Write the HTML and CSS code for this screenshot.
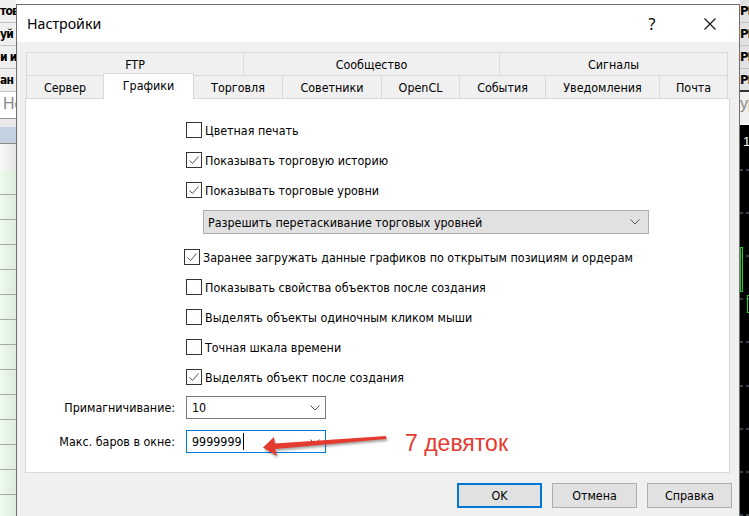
FILE: index.html
```html
<!DOCTYPE html>
<html lang="ru">
<head>
  <meta charset="UTF-8">
  <meta name="viewport" content="width=device-width, initial-scale=1.0">
  <title>Настройки</title>
  <link rel="stylesheet" href="styles.css">
</head>
<body>
<div class="desk">

  <!-- окно терминала слева (видна только узкая полоска) -->
  <div class="side side-left">
    <div class="side-row">тов</div>
    <div class="side-row">уй</div>
    <div class="side-row">и и</div>
    <div class="side-row">ан</div>
    <div class="side-note">Не</div>
    <div class="grid-band"></div>
    <div class="grid-head"></div>
    <div class="grid-top"></div>
    <div class="grid-rows">
      <div class="grid-row"></div><div class="grid-row"></div><div class="grid-row"></div>
      <div class="grid-row"></div><div class="grid-row"></div><div class="grid-row"></div>
      <div class="grid-row"></div><div class="grid-row"></div><div class="grid-row"></div>
      <div class="grid-row"></div><div class="grid-row"></div><div class="grid-row"></div>
      <div class="grid-row"></div><div class="grid-row"></div>
    </div>
  </div>

  <!-- диалог настроек -->
  <div class="dialog">
    <div class="titlebar">
      <span class="title">Настройки</span>
      <span class="tb-btn help">?</span>
      <span class="tb-btn">
        <svg width="12" height="12" viewBox="0 0 12 12"><path d="M0.5 0.5 L11.5 11.5 M11.5 0.5 L0.5 11.5" stroke="#111" stroke-width="1.1" fill="none"/></svg>
      </span>
    </div>

    <div class="dlg-body">
      <div class="tabs">
        <div class="tab-row row-top">
          <div class="tab">FTP</div>
          <div class="tab">Сообщество</div>
          <div class="tab">Сигналы</div>
        </div>
        <div class="tab-row row-bottom">
          <div class="tab">Сервер</div>
          <div class="tab active">Графики</div>
          <div class="tab">Торговля</div>
          <div class="tab">Советники</div>
          <div class="tab">OpenCL</div>
          <div class="tab">События</div>
          <div class="tab">Уведомления</div>
          <div class="tab">Почта</div>
        </div>
      </div>

      <div class="panel">
        <div class="opts">
          <div class="opt"><span class="cb"></span>Цветная печать</div>
          <div class="opt"><span class="cb on"><svg width="14" height="14" viewBox="0 0 14 14"><path d="M2.5 7.5 L5.5 10.5 L11.5 3.5" stroke="#555" stroke-width="1" fill="none"/></svg></span>Показывать торговую историю</div>
          <div class="opt"><span class="cb on"><svg width="14" height="14" viewBox="0 0 14 14"><path d="M2.5 7.5 L5.5 10.5 L11.5 3.5" stroke="#555" stroke-width="1" fill="none"/></svg></span>Показывать торговые уровни</div>
          <div class="select wide">
            <span>Разрешить перетаскивание торговых уровней</span>
            <svg class="chev" width="10" height="6" viewBox="0 0 10 6"><path d="M0.5 0.5 L5 5 L9.5 0.5" stroke="#555" stroke-width="1" fill="none"/></svg>
          </div>
          <div class="opt shift"><span class="cb on"><svg width="14" height="14" viewBox="0 0 14 14"><path d="M2.5 7.5 L5.5 10.5 L11.5 3.5" stroke="#555" stroke-width="1" fill="none"/></svg></span>Заранее загружать данные графиков по открытым позициям и ордерам</div>
          <div class="opt"><span class="cb"></span>Показывать свойства объектов после создания</div>
          <div class="opt"><span class="cb"></span>Выделять объекты одиночным кликом мыши</div>
          <div class="opt"><span class="cb"></span>Точная шкала времени</div>
          <div class="opt"><span class="cb on"><svg width="14" height="14" viewBox="0 0 14 14"><path d="M2.5 7.5 L5.5 10.5 L11.5 3.5" stroke="#555" stroke-width="1" fill="none"/></svg></span>Выделять объект после создания</div>
        </div>

        <div class="fields">
          <span class="f-label">Примагничивание:</span>
          <div class="combo">
            <span>10</span>
            <svg class="chev" width="10" height="6" viewBox="0 0 10 6"><path d="M0.5 0.5 L5 5 L9.5 0.5" stroke="#555" stroke-width="1" fill="none"/></svg>
          </div>
          <span class="f-label">Макс. баров в окне:</span>
          <div class="combo focus">
            <span>9999999</span><span class="caret"></span>
            <svg class="chev" width="10" height="6" viewBox="0 0 10 6"><path d="M0.5 0.5 L5 5 L9.5 0.5" stroke="#555" stroke-width="1" fill="none"/></svg>
          </div>
        </div>

        <!-- пометка поверх скриншота -->
        <svg class="note-arrow" width="140" height="34" viewBox="0 0 140 34">
          <path d="M131 8 L131.5 11 L20 21 L22 28 L8 19.5 L19 9 L19.8 15.5 Z" fill="#e53a2f"/>
        </svg>
        <span class="note-text">7 девяток</span>
      </div>

      <div class="buttons">
        <button class="btn default">OK</button>
        <button class="btn">Отмена</button>
        <button class="btn">Справка</button>
      </div>
    </div>
  </div>

  <!-- окно терминала справа -->
  <div class="side side-right">
    <div class="side-row">PI</div>
    <div class="side-row">PI</div>
    <div class="side-row">PI</div>
    <div class="side-row under">PI</div>
    <div class="side-note">ур</div>
    <svg class="chart" width="9" height="391" viewBox="0 0 9 391">
      <text x="3" y="21" fill="#fff" font-size="13" font-family="Liberation Sans, sans-serif">1</text>
      <path d="M0 45 H9 M0 88 H9 M0 131 H9 M0 174 H9 M0 217 H9 M0 261 H9 M0 304 H9 M0 347 H9 M0 390 H9" stroke="#6f7f8f" stroke-width="1" stroke-dasharray="3 3"/>
      <rect x="0.5" y="122.5" width="2" height="44" fill="none" stroke="#1fd11f"/>
      <rect x="7.5" y="170.5" width="3" height="17" fill="none" stroke="#1fd11f"/>
    </svg>
  </div>

</div>
</body>
</html>
```

FILE: styles.css
```css
* {
  box-sizing: border-box;
}

body {
  margin: 0;
  width: 749px;
  height: 516px;
  overflow: hidden;
  background: #fff;
  font-family: "DejaVu Sans Condensed", "DejaVu Sans", sans-serif;
  font-size: 12.4px;
  color: #000;
}

.desk {
  display: flex;
  height: 516px;
}

/* ---- фон: терминал ---- */

.side {
  flex: none;
  overflow: hidden;
  display: flex;
  flex-direction: column;
  background: #fff;
}

.side-left {
  width: 16px;
}

.side-right {
  width: 9px;
}

.side-row {
  height: 23px;
  flex: none;
  background: #efefef;
  border-bottom: 1px solid #c4c4c4;
  font-family: "DejaVu Sans Condensed", "DejaVu Sans", sans-serif;
  font-weight: bold;
  font-size: 12px;
  letter-spacing: -0.8px;
  line-height: 22px;
  white-space: nowrap;
  overflow: hidden;
}

.side-row.under {
  border-bottom: 2px solid #333;
}

.side-note {
  height: 26px;
  flex: none;
  padding-left: 3px;
  font-family: "Liberation Sans", sans-serif;
  font-size: 16px;
  line-height: 24px;
  color: #8a8a8a;
  white-space: nowrap;
  overflow: hidden;
}

.grid-band {
  height: 9px;
  flex: none;
  border-top: 1px solid #9a9a9a;
  background: #e9e9e9;
}

.grid-head {
  height: 17px;
  flex: none;
  background: #c3d1e2;
  border-bottom: 1px solid #8c8c8c;
}

.grid-top {
  height: 26px;
  flex: none;
  background: linear-gradient(to right, #fafafa, #e4e4e4);
}

.grid-rows {
  flex: none;
}

.grid-row {
  height: 25px;
  background: linear-gradient(to right, #eefbee, #dcebdc);
  border-bottom: 1px solid #a9a9a9;
}

.side-right .side-row {
  background: #e2e2e2;
  font-size: 13px;
  letter-spacing: -1px;
}

.side-right .side-note {
  height: 33px;
  padding-left: 0;
  background: #f0f0f0;
  border-bottom: 1px solid #fff;
}

.chart {
  display: block;
  flex: none;
  background: #000;
}

/* ---- диалог ---- */

.dialog {
  flex: none;
  width: 724px;
  margin-top: 4px;
  border: 1px solid #707070;
  border-bottom: none;
  background: #f0f0f0;
  display: flex;
  flex-direction: column;
}

.titlebar {
  height: 37px;
  flex: none;
  background: #fff;
  display: flex;
  align-items: center;
}

.title {
  flex: 1;
  padding-left: 10px;
  font-family: "Noto Sans", sans-serif;
  font-size: 14.2px;
}

.tb-btn {
  width: 58px;
  height: 37px;
  display: flex;
  align-items: center;
  justify-content: center;
}

.tb-btn.help {
  font-family: "Noto Sans", sans-serif;
  font-size: 16px;
}

.dlg-body {
  flex: 1;
  padding: 10px 7px 0 8px;
}

.tabs {
  margin-left: 1px;
  width: 701px;
}

.tab-row {
  display: grid;
  grid-template-rows: 23px;
  border-left: 1px solid #d9d9d9;
}

.row-top {
  grid-template-columns: 217px 256px 228px;
}

.row-bottom {
  grid-template-columns: 77px 90px 89px 99px 78px 86px 114px 68px;
}

.tab {
  border-top: 1px solid #d9d9d9;
  border-right: 1px solid #d9d9d9;
  display: flex;
  align-items: center;
  justify-content: center;
  background: #f0f0f0;
}

.tab.active {
  position: relative;
  z-index: 1;
  margin: -2px 0 -1px -1px;
  padding-bottom: 3px;
  border-left: 1px solid #d9d9d9;
  background: #fff;
}

.panel {
  position: relative;
  width: 705px;
  height: 375px;
  background: #fff;
  border: 1px solid #d9d9d9;
}

.opts {
  margin-left: 160px;
  padding-top: 16px;
}

.opt {
  height: 30px;
  display: flex;
  align-items: center;
  gap: 3px;
  white-space: nowrap;
}

.opt.shift {
  margin-left: -2px;
}

.cb {
  flex: none;
  width: 16px;
  height: 16px;
  border: 1px solid #333;
  background: #fff;
  display: flex;
  align-items: center;
  justify-content: center;
}

.select {
  display: flex;
  align-items: center;
  justify-content: space-between;
}

.select.wide {
  margin: 5px 0 8px 17px;
  width: 446px;
  height: 24px;
  padding: 0 8px 0 4px;
  background: #e1e1e1;
  border: 1px solid #adadad;
}

.fields {
  display: grid;
  grid-template-columns: 150px 140px;
  grid-auto-rows: 23px;
  column-gap: 10px;
  row-gap: 11px;
  margin-top: 4px;
}

.f-label {
  text-align: right;
  align-self: center;
  padding-right: 1px;
}

.combo {
  position: relative;
  display: flex;
  align-items: center;
  padding-left: 5px;
  background: #fff;
  border: 1px solid #7a7a7a;
}

.combo.focus {
  border-color: #0078d7;
}

.combo .chev {
  position: absolute;
  right: 5px;
  top: 8px;
}

.caret {
  width: 1px;
  height: 17px;
  margin-left: 1px;
  background: #000;
}

.note-arrow {
  position: absolute;
  left: 229px;
  top: 329px;
  filter: drop-shadow(1px 2px 1px rgba(0, 0, 0, 0.35));
}

.note-text {
  position: absolute;
  left: 379px;
  top: 331px;
  font-family: "Liberation Sans", sans-serif;
  font-size: 23px;
  color: #e53a2f;
}

.buttons {
  display: flex;
  justify-content: flex-end;
  gap: 10px;
  margin-top: 10px;
}

.btn {
  width: 85px;
  height: 25px;
  padding: 0;
  background: #e1e1e1;
  border: 1px solid #adadad;
  font: inherit;
  color: #000;
}

.btn.default {
  border: 2px solid #0078d7;
}
```
